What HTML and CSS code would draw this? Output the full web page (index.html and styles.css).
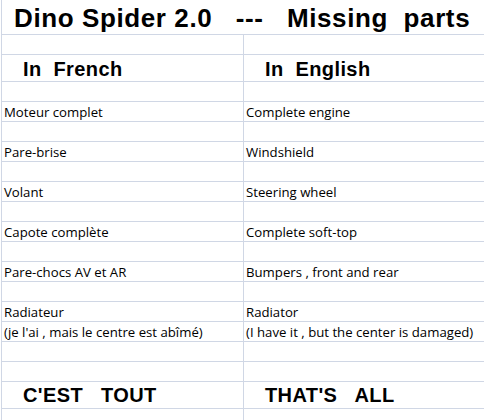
FILE: index.html
```html
<!DOCTYPE html>
<html lang="fr">
<head>
<meta charset="utf-8">
<title>Dino Spider 2.0 — Missing parts</title>
<link rel="stylesheet" href="styles.css">
</head>
<body>
<div class="sheet">
  <div class="row row-title"><span class="title">Dino Spider 2.0   ---   Missing  parts</span></div>
  <div class="row"><div class="cell"></div><div class="cell"></div></div>
  <div class="row row-head"><div class="cell head">In  French</div><div class="cell head">In  English</div></div>
  <div class="row"><div class="cell"></div><div class="cell"></div></div>
  <div class="row"><div class="cell data">Moteur complet</div><div class="cell data">Complete engine</div></div>
  <div class="row"><div class="cell"></div><div class="cell"></div></div>
  <div class="row"><div class="cell data">Pare-brise</div><div class="cell data">Windshield</div></div>
  <div class="row"><div class="cell"></div><div class="cell"></div></div>
  <div class="row"><div class="cell data">Volant</div><div class="cell data">Steering wheel</div></div>
  <div class="row"><div class="cell"></div><div class="cell"></div></div>
  <div class="row"><div class="cell data">Capote complète</div><div class="cell data">Complete soft-top</div></div>
  <div class="row"><div class="cell"></div><div class="cell"></div></div>
  <div class="row"><div class="cell data">Pare-chocs AV et AR</div><div class="cell data">Bumpers , front and rear</div></div>
  <div class="row"><div class="cell"></div><div class="cell"></div></div>
  <div class="row"><div class="cell data">Radiateur</div><div class="cell data">Radiator</div></div>
  <div class="row"><div class="cell data">(je l'ai , mais le centre est abîmé)</div><div class="cell data">(I have it , but the center is damaged)</div></div>
  <div class="row"><div class="cell"></div><div class="cell"></div></div>
  <div class="row"><div class="cell"></div><div class="cell"></div></div>
  <div class="row row-end"><div class="cell end">C'EST   TOUT</div><div class="cell end">THAT'S   ALL</div></div>
  <div class="row"><div class="cell"></div><div class="cell"></div></div>
</div>
</body>
</html>
```

FILE: styles.css
```css
html, body {
  margin: 0;
  padding: 0;
  background: #ffffff;
}

body {
  width: 484px;
  height: 420px;
  overflow: hidden;
}

.sheet {
  margin-left: 1px;
  border-left: 1px solid #d0d7e5;
  color: #000000;
}

.row {
  display: grid;
  grid-template-columns: 242px 1fr;
  height: 20px;
  box-sizing: border-box;
  border-bottom: 1px solid #d0d7e5;
}

.cell {
  white-space: pre;
  overflow: visible;
}

.cell:first-child {
  border-right: 1px solid #d0d7e5;
}

.row-title {
  display: block;
  height: 35px;
  padding: 5px 0 0 12px;
}

.title {
  font-family: "Liberation Sans", Arial, sans-serif;
  font-weight: bold;
  font-size: 26px;
  line-height: 26px;
  letter-spacing: 0.6px;
  white-space: pre;
}

.row-head {
  height: 27px;
}

.head {
  font-family: "Liberation Sans", Arial, sans-serif;
  font-weight: bold;
  font-size: 20px;
  line-height: 20px;
  letter-spacing: 0.4px;
  padding: 4px 0 0 21px;
}

.data {
  font-family: "Open Sans", sans-serif;
  font-size: 13.2px;
  line-height: 15px;
  padding: 3px 0 0 2px;
}

.row-end {
  height: 27px;
}

.end {
  font-family: "Liberation Sans", Arial, sans-serif;
  font-weight: bold;
  font-size: 20px;
  line-height: 20px;
  letter-spacing: 0.4px;
  padding: 3px 0 0 21px;
}
```
